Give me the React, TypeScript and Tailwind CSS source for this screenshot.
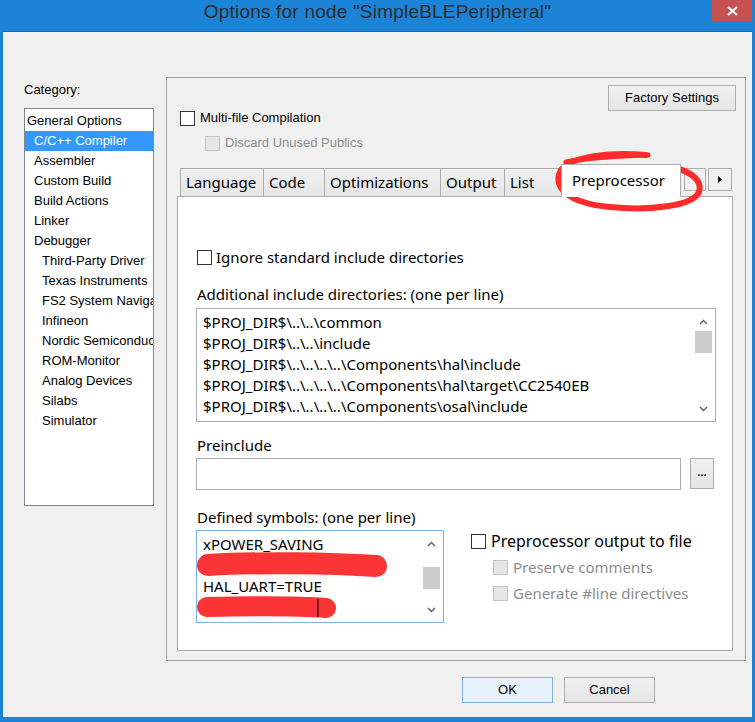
import { ReactNode } from 'react';

const categories = [
  { label: 'General Options', level: 0 },
  { label: 'C/C++ Compiler', level: 1, selected: true },
  { label: 'Assembler', level: 1 },
  { label: 'Custom Build', level: 1 },
  { label: 'Build Actions', level: 1 },
  { label: 'Linker', level: 1 },
  { label: 'Debugger', level: 1 },
  { label: 'Third-Party Driver', level: 2 },
  { label: 'Texas Instruments', level: 2 },
  { label: 'FS2 System Navigator', level: 2 },
  { label: 'Infineon', level: 2 },
  { label: 'Nordic Semiconductor', level: 2 },
  { label: 'ROM-Monitor', level: 2 },
  { label: 'Analog Devices', level: 2 },
  { label: 'Silabs', level: 2 },
  { label: 'Simulator', level: 2 },
];

const tabs = [
  { label: 'Language', w: 'w-[84px]' },
  { label: 'Code', w: 'w-[62px]' },
  { label: 'Optimizations', w: 'w-[117px]' },
  { label: 'Output', w: 'w-[65px]' },
  { label: 'List', w: 'w-[58px]' },
];

const includeDirs = [
  '$PROJ_DIR$\\..\\..\\common',
  '$PROJ_DIR$\\..\\..\\include',
  '$PROJ_DIR$\\..\\..\\..\\..\\Components\\hal\\include',
  '$PROJ_DIR$\\..\\..\\..\\..\\Components\\hal\\target\\CC2540EB',
  '$PROJ_DIR$\\..\\..\\..\\..\\Components\\osal\\include',
];

const symbols = ['xPOWER_SAVING', '', 'HAL_UART=TRUE', ''];

function Checkbox({ disabled }: { disabled?: boolean }) {
  return (
    <div
      className={
        disabled
          ? 'w-[15px] h-[15px] shrink-0 border border-[#c4c4c4] bg-[#e6e6e6]'
          : 'w-[15px] h-[15px] shrink-0 border border-[#333] bg-white'
      }
    />
  );
}

function Chevron({ up }: { up?: boolean }) {
  return (
    <svg width="9" height="6" viewBox="0 0 9 6">
      <path
        d={up ? 'M1 5 L4.5 1.5 L8 5' : 'M1 1 L4.5 4.5 L8 1'}
        fill="none"
        stroke="#606060"
        strokeWidth="1.4"
      />
    </svg>
  );
}

function ScrollBar({ thumbTop, thumbH, h }: { thumbTop: string; thumbH: string; h: string }) {
  return (
    <div className={`w-[21px] ${h} flex flex-col items-center`}>
      <div className="h-[17px] flex items-center justify-center">
        <Chevron up />
      </div>
      <div className="flex-1 w-full flex flex-col items-center">
        <div className={`${thumbTop} ${thumbH} w-[17px] bg-[#cdcdcd]`} />
      </div>
      <div className="h-[17px] flex items-center justify-center">
        <Chevron />
      </div>
    </div>
  );
}

function WinButton({ children, primary, className }: { children: ReactNode; primary?: boolean; className?: string }) {
  return (
    <div
      className={`${className ?? ''} flex items-center justify-center text-[13px] text-black ${
        primary
          ? 'border border-[#7eb4ea] bg-[#e5f1fb]'
          : 'border border-[#adadad] bg-gradient-to-b from-[#f0f0f0] to-[#e5e5e5]'
      }`}
    >
      {children}
    </div>
  );
}

export default function App() {
  return (
    <div className="relative w-[755px] h-[722px] bg-[#1b84d8] flex flex-col font-['Liberation_Sans',Arial,sans-serif] overflow-hidden">
      {/* Title bar */}
      <div className="relative h-[31px] flex items-center justify-center">
        <span className="text-[19px] text-[#2b2b2b] font-['Liberation_Sans_Narrow','Liberation_Sans',sans-serif] tracking-[0.2px] -mt-[6px]">
          Options for node "SimpleBLEPeripheral"
        </span>
        <div className="absolute right-[3px] top-0 w-[40px] h-[21px] bg-[#c75050] flex items-center justify-center">
          <svg width="11" height="10" viewBox="0 0 11 10">
            <path d="M1 1 L10 9 M10 1 L1 9" stroke="white" strokeWidth="2.2" />
          </svg>
        </div>
      </div>

      {/* Window body */}
      <div className="mx-[3px] h-[686px] bg-[#f0f0f0] border-t border-[#1669b5] flex flex-col">
        <div className="flex">
          {/* Category column */}
          <div className="ml-[21px] w-[130px] pt-[49px]">
            <div className="h-[18px] leading-[18px] text-[13px] text-black">Category:</div>
            <div className="mt-[9px] h-[398px] border border-[#828790] bg-white pt-[2px] overflow-hidden">
              {categories.map((c) => (
                <div
                  key={c.label}
                  className={`h-[20px] leading-[20px] text-[13px] whitespace-nowrap overflow-hidden ${
                    c.selected ? 'bg-[#3399ff] text-white' : 'text-black'
                  } ${c.level === 0 ? 'pl-[2px]' : c.level === 1 ? 'pl-[9px]' : 'pl-[17px]'}`}
                >
                  {c.label}
                </div>
              ))}
            </div>
          </div>

          {/* Options panel */}
          <div className="ml-[12px] mt-[45px] w-[580px] h-[584px] border border-[#a0a0a0] flex flex-col">
            <div className="h-[86px] flex justify-between">
              <div className="pl-[13px] pt-[32px] flex flex-col gap-[9px] text-[13px]">
                <div className="h-[16px] flex items-center gap-[5px] text-black">
                  <Checkbox />
                  <span>Multi-file Compilation</span>
                </div>
                <div className="h-[16px] flex items-center gap-[5px] pl-[25px] text-[#8d8d8d]">
                  <Checkbox disabled />
                  <span>Discard Unused Publics</span>
                </div>
              </div>
              <div className="pt-[7px] pr-[9px]">
                <WinButton className="w-[128px] h-[26px]">Factory Settings</WinButton>
              </div>
            </div>

            {/* Tabs + page */}
            <div className="ml-[10px] w-[556px] flex flex-col font-['Noto_Sans','Liberation_Sans',sans-serif]">
              <div className="h-[32px] pl-[3px] flex items-end">
                {tabs.map((t) => (
                  <div
                    key={t.label}
                    className={`${t.w} -ml-px first:ml-0 h-[28px] border border-b-0 border-[#acacac] bg-gradient-to-b from-[#f0f0f0] to-[#e5e5e5] pl-[5px] leading-[26px] text-[15px] text-black whitespace-nowrap overflow-hidden`}
                  >
                    {t.label}
                  </div>
                ))}
                <div className="relative z-10 -ml-[1px] -mb-px h-[33px] w-[120px] border border-b-0 border-[#acacac] bg-white pl-[10px] leading-[30px] text-[15px] text-black">
                  Preprocessor
                </div>
                <div className="self-start mt-[4px] ml-[3px] flex gap-[2px]">
                  <div className="w-[22px] h-[23px] border border-[#acacac] bg-[#f0f0f0] flex items-center justify-center">
                    <svg width="4" height="7" viewBox="0 0 4 7">
                      <path d="M4 0 L0 3.5 L4 7 Z" fill="#000" />
                    </svg>
                  </div>
                  <div className="w-[24px] h-[23px] border border-[#acacac] bg-[#f0f0f0] flex items-center justify-center">
                    <svg width="4" height="7" viewBox="0 0 4 7">
                      <path d="M0 0 L4 3.5 L0 7 Z" fill="#000" />
                    </svg>
                  </div>
                </div>
              </div>

              <div className="h-[455px] border border-[#acacac] bg-white pl-[18px] flex flex-col text-[15px] text-black">
                <div className="mt-[52px] h-[16px] flex items-center gap-[4px] pl-[1px]">
                  <Checkbox />
                  <span className="w-[255px] whitespace-nowrap overflow-hidden">Ignore standard include directories</span>
                </div>

                <div className="mt-[19px] h-[20px] leading-[20px] pl-[1px]">Additional include directories: (one per line)</div>
                <div className="mt-[4px] w-[520px] h-[114px] border border-[#abadb3] flex">
                  <div className="flex-1 pl-[6px] pt-[3px]">
                    {includeDirs.map((d) => (
                      <div key={d} className="h-[21px] leading-[21px] whitespace-nowrap">
                        {d}
                      </div>
                    ))}
                  </div>
                  <div className="pr-[1px] pt-[4px]">
                    <ScrollBar h="h-[104px]" thumbTop="mt-[1px]" thumbH="h-[22px]" />
                  </div>
                </div>

                <div className="mt-[13px] h-[20px] leading-[20px] pl-[1px]">Preinclude</div>
                <div className="mt-[3px] flex gap-[9px]">
                  <div className="w-[485px] h-[32px] border border-[#abadb3]" />
                  <WinButton className="w-[24px] h-[31px] !text-[11px] font-bold">
                    <span className="-mt-[2px]">...</span>
                  </WinButton>
                </div>

                <div className="mt-[17px] h-[20px] leading-[20px] pl-[1px]">Defined symbols: (one per line)</div>
                <div className="mt-[3px] flex">
                  <div className="w-[248px] h-[93px] border border-[#7eb4ea] flex">
                    <div className="flex-1 pl-[6px] pt-[3px]">
                      {symbols.map((s, i) => (
                        <div key={i} className="h-[21px] leading-[21px] whitespace-nowrap">
                          {s}
                        </div>
                      ))}
                    </div>
                    <div className="pr-[1px] pt-[4px]">
                      <ScrollBar h="h-[83px]" thumbTop="mt-[15px]" thumbH="h-[22px]" />
                    </div>
                  </div>
                  <div className="ml-[27px] pt-[3px] flex flex-col">
                    <div className="h-[16px] flex items-center gap-[5px] text-[16px]">
                      <Checkbox />
                      <span>Preprocessor output to file</span>
                    </div>
                    <div className="mt-[10px] ml-[22px] h-[16px] flex items-center gap-[5px] text-[#8d8d8d]">
                      <Checkbox disabled />
                      <span>Preserve comments</span>
                    </div>
                    <div className="mt-[10px] ml-[22px] h-[16px] flex items-center gap-[5px] text-[#8d8d8d]">
                      <Checkbox disabled />
                      <span>Generate #line directives</span>
                    </div>
                  </div>
                </div>
              </div>
            </div>
          </div>
        </div>

        {/* Dialog buttons */}
        <div className="mt-[16px] pr-[97px] flex justify-end gap-[11px]">
          <WinButton primary className="w-[91px] h-[26px]">
            OK
          </WinButton>
          <WinButton className="w-[91px] h-[26px]">Cancel</WinButton>
        </div>
      </div>

      {/* Red marker annotations drawn over the screenshot */}
      <svg className="absolute inset-0 pointer-events-none" width="755" height="722" viewBox="0 0 755 722">
        <path
          d="M646 155 C610 152 572 156 561 170 C552 186 566 203 610 207 C650 211 693 206 699 192 C703 180 690 172 676 168"
          fill="none"
          stroke="#ff2b2b"
          strokeWidth="6"
          strokeLinecap="round"
        />
        <path d="M566 162 C590 157 620 156 648 155" fill="none" stroke="#ff2b2b" strokeWidth="5" strokeLinecap="round" />
        <path d="M208 565 C260 562 330 563 376 566" fill="none" stroke="#fb3535" strokeWidth="22" strokeLinecap="round" />
        <path d="M207 607 C250 606 300 606 326 608" fill="none" stroke="#fb3535" strokeWidth="20" strokeLinecap="round" />
        <path d="M318 599 L318 617" stroke="#000" strokeWidth="1" />
      </svg>
    </div>
  );
}
